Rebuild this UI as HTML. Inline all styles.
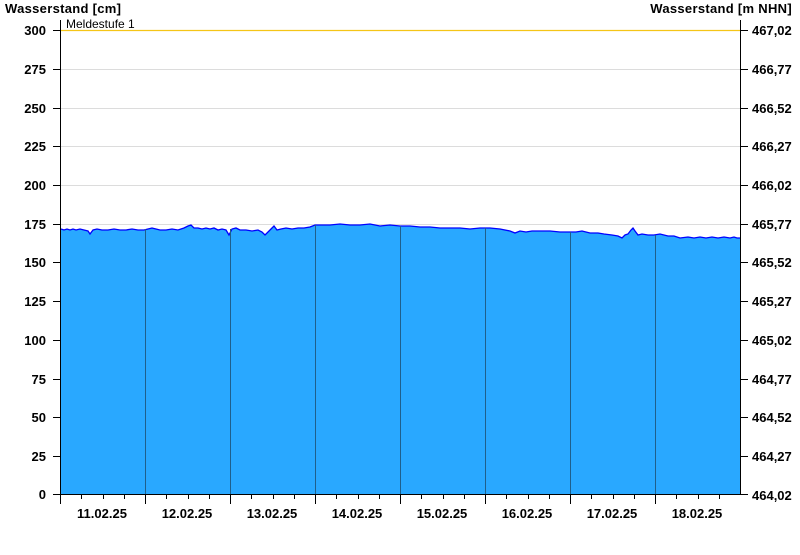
<!DOCTYPE html>
<html><head><meta charset="utf-8"><style>
html,body{margin:0;padding:0;background:#fff;}
svg text{font-family:"Liberation Sans",Arial,sans-serif;}
</style></head><body>
<svg width="800" height="550" xmlns="http://www.w3.org/2000/svg">
<rect width="800" height="550" fill="#fff"/>
<g stroke="#dcdcdc" stroke-width="1">
<line x1="60" y1="69.5" x2="740" y2="69.5"/><line x1="60" y1="108.5" x2="740" y2="108.5"/>
<line x1="60" y1="146.5" x2="740" y2="146.5"/><line x1="60" y1="185.5" x2="740" y2="185.5"/>
<line x1="60" y1="224.5" x2="740" y2="224.5"/>
</g>
<line x1="60" y1="30.5" x2="740" y2="30.5" stroke="#f5c518" stroke-width="1.2"/>
<text x="66" y="28" font-size="12" fill="#000">Meldestufe 1</text>
<polygon fill="#29a8ff" points="61,495 61,229 64,230 67,229 70,230 73,229 76,230 80,229 84,230 88,231 90,234 93,230 97,229 102,230 108,230 114,229 120,230 126,230 132,229 138,230 144,230 148,229 152,228 156,229 160,230 166,230 172,229 178,230 184,228 188,226 191,225 194,228 198,228 202,229 206,228 210,229 214,228 218,230 222,229 226,230 229,235 232,229 236,228 240,230 246,230 252,231 258,230 262,232 265,235 268,232 272,228 274,226 277,230 281,229 286,228 292,229 298,228 304,228 310,227 315,225 320,225 330,225 340,224 350,225 360,225 370,224 380,226 390,225 400,226 410,226 420,227 430,227 440,228 450,228 460,228 470,229 480,228 490,228 500,229 510,231 515,233 520,231 526,232 532,231 540,231 550,231 560,232 570,232 576,232 582,231 590,233 598,233 604,234 612,235 618,236 622,238 625,235 628,234 631,230 633,228 635,231 638,235 642,234 648,235 654,235 660,234 668,236 674,236 680,238 688,237 694,238 700,237 706,238 712,237 718,238 724,237 730,238 734,237 737,238 740,238 740,495"/>
<polyline fill="none" stroke="#0000ff" stroke-width="1.3" points="61,229 64,230 67,229 70,230 73,229 76,230 80,229 84,230 88,231 90,234 93,230 97,229 102,230 108,230 114,229 120,230 126,230 132,229 138,230 144,230 148,229 152,228 156,229 160,230 166,230 172,229 178,230 184,228 188,226 191,225 194,228 198,228 202,229 206,228 210,229 214,228 218,230 222,229 226,230 229,235 232,229 236,228 240,230 246,230 252,231 258,230 262,232 265,235 268,232 272,228 274,226 277,230 281,229 286,228 292,229 298,228 304,228 310,227 315,225 320,225 330,225 340,224 350,225 360,225 370,224 380,226 390,225 400,226 410,226 420,227 430,227 440,228 450,228 460,228 470,229 480,228 490,228 500,229 510,231 515,233 520,231 526,232 532,231 540,231 550,231 560,232 570,232 576,232 582,231 590,233 598,233 604,234 612,235 618,236 622,238 625,235 628,234 631,230 633,228 635,231 638,235 642,234 648,235 654,235 660,234 668,236 674,236 680,238 688,237 694,238 700,237 706,238 712,237 718,238 724,237 730,238 734,237 737,238 740,238"/>
<g stroke="#1f5f8b" stroke-width="1">
<line x1="145.5" y1="229" x2="145.5" y2="495"/><line x1="230.5" y1="229" x2="230.5" y2="495"/>
<line x1="315.5" y1="225" x2="315.5" y2="495"/><line x1="400.5" y1="226" x2="400.5" y2="495"/>
<line x1="485.5" y1="228" x2="485.5" y2="495"/><line x1="570.5" y1="232" x2="570.5" y2="495"/>
<line x1="655.5" y1="235" x2="655.5" y2="495"/>
</g>
<g stroke="#000" stroke-width="1">
<line x1="60.5" y1="20" x2="60.5" y2="495"/><line x1="740.5" y1="20" x2="740.5" y2="495"/>
<line x1="60" y1="494.5" x2="741" y2="494.5"/>
</g>
<g stroke="#000" stroke-width="1" id="lt">
<line x1="53" y1="30.5" x2="60" y2="30.5"/><line x1="53" y1="69.5" x2="60" y2="69.5"/><line x1="53" y1="108.5" x2="60" y2="108.5"/><line x1="53" y1="146.5" x2="60" y2="146.5"/><line x1="53" y1="185.5" x2="60" y2="185.5"/><line x1="53" y1="224.5" x2="60" y2="224.5"/><line x1="53" y1="262.5" x2="60" y2="262.5"/><line x1="53" y1="301.5" x2="60" y2="301.5"/><line x1="53" y1="340.5" x2="60" y2="340.5"/><line x1="53" y1="379.5" x2="60" y2="379.5"/><line x1="53" y1="417.5" x2="60" y2="417.5"/><line x1="53" y1="456.5" x2="60" y2="456.5"/><line x1="53" y1="494.5" x2="60" y2="494.5"/>
</g>
<use href="#lt" transform="translate(688,0)"/>
<g stroke="#000" stroke-width="1">
<line x1="60.5" y1="495" x2="60.5" y2="504"/><line x1="145.5" y1="495" x2="145.5" y2="504"/><line x1="230.5" y1="495" x2="230.5" y2="504"/><line x1="315.5" y1="495" x2="315.5" y2="504"/><line x1="400.5" y1="495" x2="400.5" y2="504"/><line x1="485.5" y1="495" x2="485.5" y2="504"/><line x1="570.5" y1="495" x2="570.5" y2="504"/><line x1="655.5" y1="495" x2="655.5" y2="504"/>
</g>
<g stroke="#000" stroke-width="1">
<line x1="81.5" y1="495" x2="81.5" y2="499"/><line x1="103.5" y1="495" x2="103.5" y2="499"/><line x1="124.5" y1="495" x2="124.5" y2="499"/>
<line x1="166.5" y1="495" x2="166.5" y2="499"/><line x1="188.5" y1="495" x2="188.5" y2="499"/><line x1="209.5" y1="495" x2="209.5" y2="499"/>
<line x1="251.5" y1="495" x2="251.5" y2="499"/><line x1="273.5" y1="495" x2="273.5" y2="499"/><line x1="294.5" y1="495" x2="294.5" y2="499"/>
<line x1="336.5" y1="495" x2="336.5" y2="499"/><line x1="358.5" y1="495" x2="358.5" y2="499"/><line x1="379.5" y1="495" x2="379.5" y2="499"/>
<line x1="421.5" y1="495" x2="421.5" y2="499"/><line x1="443.5" y1="495" x2="443.5" y2="499"/><line x1="464.5" y1="495" x2="464.5" y2="499"/>
<line x1="506.5" y1="495" x2="506.5" y2="499"/><line x1="528.5" y1="495" x2="528.5" y2="499"/><line x1="549.5" y1="495" x2="549.5" y2="499"/>
<line x1="591.5" y1="495" x2="591.5" y2="499"/><line x1="613.5" y1="495" x2="613.5" y2="499"/><line x1="634.5" y1="495" x2="634.5" y2="499"/>
<line x1="676.5" y1="495" x2="676.5" y2="499"/><line x1="698.5" y1="495" x2="698.5" y2="499"/><line x1="719.5" y1="495" x2="719.5" y2="499"/>
</g>
<g font-size="13" font-weight="bold" fill="#000" letter-spacing="0.3">
<text x="5" y="13">Wasserstand [cm]</text>
<text x="792" y="13" text-anchor="end">Wasserstand [m NHN]</text>
</g>
<g font-size="13" font-weight="bold" fill="#000" text-anchor="end">
<text x="46" y="35">300</text><text x="46" y="74">275</text><text x="46" y="113">250</text><text x="46" y="151">225</text><text x="46" y="190">200</text><text x="46" y="229">175</text><text x="46" y="267">150</text><text x="46" y="306">125</text><text x="46" y="345">100</text><text x="46" y="384">75</text><text x="46" y="422">50</text><text x="46" y="461">25</text><text x="46" y="499">0</text>
</g>
<g font-size="13" font-weight="bold" fill="#000">
<text x="752" y="35">467,02</text><text x="752" y="74">466,77</text><text x="752" y="113">466,52</text><text x="752" y="151">466,27</text><text x="752" y="190">466,02</text><text x="752" y="229">465,77</text><text x="752" y="267">465,52</text><text x="752" y="306">465,27</text><text x="752" y="345">465,02</text><text x="752" y="384">464,77</text><text x="752" y="422">464,52</text><text x="752" y="461">464,27</text><text x="752" y="500">464,02</text>
</g>
<g font-size="13" font-weight="bold" fill="#000" text-anchor="middle">
<text x="102" y="518">11.02.25</text><text x="187" y="518">12.02.25</text><text x="272" y="518">13.02.25</text><text x="357" y="518">14.02.25</text><text x="442" y="518">15.02.25</text><text x="527" y="518">16.02.25</text><text x="612" y="518">17.02.25</text><text x="697" y="518">18.02.25</text>
</g>
</svg>
</body></html>
